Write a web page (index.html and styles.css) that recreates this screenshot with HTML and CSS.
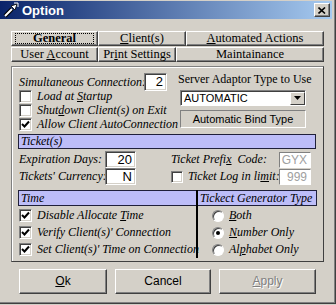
FILE: index.html
```html
<!DOCTYPE html>
<html lang="en">
<head>
  <meta charset="UTF-8">
  <title>Option</title>
  <link rel="stylesheet" href="styles.css">
</head>
<body>

  <div class="window">
    <div class="titlebar">
      <svg class="app-icon" width="16" height="16" viewBox="0 0 16 16">
        <path d="M2 14 L9 7" stroke="#000" stroke-width="4"/>
        <path d="M2 14 L9 7" stroke="#fff" stroke-width="2"/>
        <path d="M8 4 L12 8 L14 2 Z" fill="#fff" stroke="#000" stroke-width="0.8"/>
        <path d="M11 1 L15 1 M15 1 L15 5" stroke="#fff" stroke-width="1"/>
      </svg>
      <span class="title">Option</span>
      <span class="close-btn">
        <svg width="8" height="7" viewBox="0 0 8 7"><path d="M0.5 0.5 L7 6.5 M7 0.5 L0.5 6.5" stroke="#000" stroke-width="1.6"/></svg>
      </span>
    </div>

    <div class="tabs">
      <div class="tab-row row-1">
        <div class="tab active"><span class="focus">General</span></div>
        <div class="tab"><u>C</u>lient(s)</div>
        <div class="tab"><u>A</u>utomated Actions</div>
      </div>
      <div class="tab-row row-2">
        <div class="tab">User <u>A</u>ccount</div>
        <div class="tab">Pr<u>i</u>nt Settings</div>
        <div class="tab">Maintainance</div>
      </div>
    </div>

    <div class="panel">
      <div class="top">
        <div class="top-left">
          <div class="sim-row">
            <span class="lbl sim-lbl">Simultaneous Connection:</span>
            <span class="field sim-field">2</span>
          </div>
          <div class="check-row"><span class="chk"></span><span class="lbl">Load at <u>S</u>tartup</span></div>
          <div class="check-row"><span class="chk"></span><span class="lbl">Shut<u>d</u>own Client(s) on Exit</span></div>
          <div class="check-row"><span class="chk"><svg width="9" height="9" viewBox="0 0 9 9"><path d="M1 4 L3.5 6.5 L8 1.5" stroke="#000" stroke-width="2" fill="none"/></svg></span><span class="lbl">Allow Client AutoConnection</span></div>
        </div>
        <div class="top-right">
          <div class="adaptor-lbl">Server Adaptor Type to Use</div>
          <div class="combo">
            <span class="combo-text">AUTOMATIC</span>
            <span class="combo-btn"><svg width="7" height="4" viewBox="0 0 7 4"><path d="M0 0 H7 L3.5 4 Z" fill="#000"/></svg></span>
          </div>
          <div class="bind-box">Automatic Bind Type</div>
        </div>
      </div>

      <div class="header ticket-head">Ticket(s)</div>

      <div class="ticket">
        <div class="ticket-left">
          <div class="field-row"><span class="lbl tl-lbl">Expiration Days:</span><span class="field t-field">20</span></div>
          <div class="field-row"><span class="lbl tl-lbl">Tickets' Currency:</span><span class="field t-field">N</span></div>
        </div>
        <div class="ticket-right">
          <div class="field-row"><span class="lbl tr-lbl">Ticket Prefi<u>x</u>&nbsp; Code:</span><span class="field r-field disabled">GYX</span></div>
          <div class="field-row">
            <span class="chk small"></span>
            <span class="lbl log-lbl">Ticket Log in li<u>m</u>it:</span>
            <span class="field r-field disabled">999</span>
          </div>
        </div>
      </div>

      <div class="time">
        <div class="time-left">
          <div class="header time-head">Time</div>
          <div class="check-row t-row"><span class="chk"><svg width="9" height="9" viewBox="0 0 9 9"><path d="M1 4 L3.5 6.5 L8 1.5" stroke="#000" stroke-width="2" fill="none"/></svg></span><span class="lbl">Disable Allocate <u>T</u>ime</span></div>
          <div class="check-row t-row"><span class="chk"><svg width="9" height="9" viewBox="0 0 9 9"><path d="M1 4 L3.5 6.5 L8 1.5" stroke="#000" stroke-width="2" fill="none"/></svg></span><span class="lbl">Veri<u>f</u>y Client(s)' Connection</span></div>
          <div class="check-row t-row"><span class="chk"><svg width="9" height="9" viewBox="0 0 9 9"><path d="M1 4 L3.5 6.5 L8 1.5" stroke="#000" stroke-width="2" fill="none"/></svg></span><span class="lbl">Set Client(s)' Time on Connection</span></div>
        </div>
        <div class="time-right">
          <div class="header gen-head">Tickect Generator Type</div>
          <div class="radio-row"><span class="radio"></span><span class="lbl"><u>B</u>oth</span></div>
          <div class="radio-row"><span class="radio on"></span><span class="lbl"><u>N</u>umber Only</span></div>
          <div class="radio-row"><span class="radio"></span><span class="lbl">Al<u>p</u>habet Only</span></div>
        </div>
      </div>
    </div>

    <div class="buttons">
      <div class="btn btn-ok"><u>O</u>k</div>
      <div class="btn btn-cancel">Cancel</div>
      <div class="btn btn-apply disabled"><u>A</u>pply</div>
    </div>
  </div>

</body>
</html>
```

FILE: styles.css
```css
* {
  box-sizing: border-box;
  margin: 0;
  padding: 0;
}

body {
  background: #d4d0c8;
  font-family: "Liberation Serif", serif;
  font-size: 12px;
  color: #000;
}

.window {
  width: 336px;
  height: 304px;
  padding-top: 1px;
  background: #d4d0c8;
  border-right: 1px solid #404040;
  border-bottom: 1px solid #404040;
  box-shadow: inset -1px -1px #808080;
}

/* barre de titre */
.titlebar {
  width: 332px;
  height: 18px;
  display: flex;
  align-items: center;
  background: linear-gradient(to right, #0a246a, #a6caf0);
}

.app-icon {
  margin-left: 3px;
}

.title {
  margin-left: 3px;
  font-family: "Liberation Sans", Arial, sans-serif;
  font-weight: bold;
  font-size: 13px;
  color: #fff;
}

.close-btn {
  margin-left: auto;
  margin-right: 2px;
  width: 16px;
  height: 14px;
  display: flex;
  align-items: center;
  justify-content: center;
  background: #d4d0c8;
  border: 1px solid;
  border-color: #fff #404040 #404040 #fff;
  box-shadow: inset -1px -1px #808080;
}

/* onglets */
.tabs {
  margin: 12px 0 0 11px;
  width: 313px;
}

.tab-row {
  display: grid;
  height: 15px;
}

.row-1 {
  grid-template-columns: 87px 88px 1fr;
}

.row-2 {
  grid-template-columns: 87px 78px 1fr;
  margin-top: 1px;
}

.tab {
  font-size: 12.5px;
  line-height: 12px;
  text-align: center;
  border: 1px solid;
  border-color: #fff #404040 #404040 #fff;
  box-shadow: inset -1px -1px #808080;
  white-space: nowrap;
}

.tab.active {
  font-weight: bold;
  padding: 1px 3px;
}

.focus {
  display: block;
  line-height: 9px;
  height: 11px;
  border: 1px dotted #000;
}

/* panneau */
.panel {
  margin: 4px 0 0 11px;
  width: 313px;
  height: 196px;
  border: 1px solid;
  border-color: #808080 #404040 #404040 #808080;
  box-shadow: inset 1px 1px #fff;
  padding: 6px 0 0 7px;
}

.lbl {
  font-style: italic;
  font-size: 12px;
  white-space: nowrap;
}

.field {
  background: #fff;
  border: 1px solid;
  border-color: #808080 #fff #fff #808080;
  box-shadow: inset 1px 1px #404040, inset -1px -1px #d4d0c8;
  font-family: "Liberation Sans", Arial, sans-serif;
  font-size: 12px;
  text-align: right;
  padding-right: 3px;
}

.field.disabled {
  color: #a0a0a0;
  box-shadow: none;
  border-color: #808080 #fff #fff #808080;
}

.top {
  display: flex;
  height: 61px;
}

.top-left {
  width: 159px;
}

.sim-row {
  display: flex;
  height: 16px;
  align-items: flex-start;
}

.sim-lbl {
  width: 125px;
  line-height: 18px;
}

.sim-field {
  width: 23px;
  height: 18px;
  line-height: 16px;
  font-size: 13px;
}

.check-row {
  display: flex;
  align-items: center;
  height: 14px;
}

.chk {
  width: 13px;
  height: 13px;
  flex-shrink: 0;
  display: flex;
  align-items: center;
  justify-content: center;
  background: #fff;
  border: 1px solid;
  border-color: #808080 #fff #fff #808080;
  box-shadow: inset 1px 1px #404040, inset -1px -1px #d4d0c8;
  margin-right: 5px;
}

.chk.small {
  width: 12px;
  height: 12px;
}

.top-right {
  width: 130px;
}

.adaptor-lbl {
  margin-top: -1px;
  line-height: 14px;
  font-size: 12px;
  white-space: nowrap;
}

.combo {
  margin: 4px 0 0 2px;
  width: 126px;
  height: 16px;
  display: flex;
  align-items: center;
  background: #fff;
  border: 1px solid;
  border-color: #808080 #fff #fff #808080;
  box-shadow: inset 1px 1px #404040;
}

.combo-text {
  flex: 1;
  padding-left: 3px;
  font-family: "Liberation Sans", Arial, sans-serif;
  font-size: 11px;
}

.combo-btn {
  width: 15px;
  height: 13px;
  display: flex;
  align-items: center;
  justify-content: center;
  background: #d4d0c8;
  border: 1px solid;
  border-color: #fff #404040 #404040 #fff;
}

.bind-box {
  margin: 4px 0 0 2px;
  width: 126px;
  height: 18px;
  font-family: "Liberation Sans", Arial, sans-serif;
  font-size: 11px;
  line-height: 16px;
  text-align: center;
  border: 1px solid;
  border-color: #808080 #fff #fff #808080;
}

/* en-têtes */
.header {
  background: #bdbdf8;
  border: 1px solid #20203a;
  font-style: italic;
  font-size: 12px;
  line-height: 12px;
  padding-left: 2px;
  overflow: hidden;
  white-space: nowrap;
}

.ticket-head {
  margin-left: -1px;
  width: 298px;
  height: 15px;
}

.ticket {
  display: flex;
  margin-top: 2px;
}

.ticket-left {
  width: 152px;
}

.field-row {
  display: flex;
  align-items: center;
  height: 17px;
}

.tl-lbl {
  width: 86px;
}

.t-field {
  width: 31px;
  height: 17px;
  line-height: 15px;
  font-size: 13px;
}

.tr-lbl {
  width: 108px;
}

.log-lbl {
  width: 91px;
}

.r-field {
  width: 32px;
  height: 16px;
  line-height: 14px;
}

/* section heure */
.time {
  display: flex;
  margin-top: 5px;
  margin-left: -1px;
  height: 68px;
}

.time-left {
  width: 178px;
}

.time-head {
  height: 16px;
  line-height: 14px;
  border-right: none;
}

.t-row {
  height: 17px;
  padding-left: 1px;
}

.t-row:nth-child(2) {
  margin-top: 1px;
}

.time-right {
  width: 121px;
  border-left: 2px solid #000;
}

.gen-head {
  height: 16px;
  line-height: 14px;
  border-left: none;
}

.radio-row {
  display: flex;
  align-items: center;
  height: 17px;
  padding-left: 14px;
}

.radio-row:nth-child(2) {
  margin-top: 1px;
}

.radio {
  width: 12px;
  height: 12px;
  margin-right: 5px;
  border-radius: 50%;
  background: #fff;
  border: 1px solid;
  border-color: #808080 #fff #fff #808080;
  box-shadow: inset 1px 1px #404040;
  display: flex;
  align-items: center;
  justify-content: center;
}

.radio.on::after {
  content: "";
  width: 4px;
  height: 4px;
  border-radius: 50%;
  background: #000;
}

/* boutons */
.buttons {
  display: flex;
  gap: 8px;
  margin: 7px 0 0 19px;
}

.btn {
  height: 25px;
  font-family: "Liberation Sans", Arial, sans-serif;
  font-size: 12px;
  line-height: 23px;
  text-align: center;
  border: 1px solid;
  border-color: #fff #404040 #404040 #fff;
  box-shadow: inset -1px -1px #808080;
}

.btn-ok {
  width: 88px;
}

.btn-cancel {
  width: 96px;
}

.btn-apply {
  width: 97px;
}

.btn.disabled {
  color: #808080;
  text-shadow: 1px 1px #fff;
}
```
